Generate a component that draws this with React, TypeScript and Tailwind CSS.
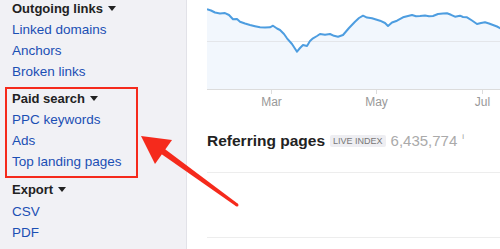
import React from 'react';

const linePoints: [number, number][] = [
  [0, 9.3], [4, 10.5], [8, 12.5], [13, 13.4], [18, 13.1], [22, 15], [26, 19.3], [30, 19], [33, 21.7],
  [38, 23.5], [43, 25], [48, 26.2], [53, 27.3], [58, 27.6], [63, 27.3], [66, 25.7], [70, 28.5],
  [73, 30], [77, 34], [80, 38.3], [85, 44], [90, 51.7], [93, 48], [96, 45], [100, 46], [103, 41],
  [106, 38.3], [110, 36], [113, 34], [118, 34.7], [123, 34], [127, 35.8], [131, 36.7], [136, 35],
  [142, 28], [148, 21.7], [152, 18], [156, 15.7], [160, 17.6], [165, 18.3], [173, 20.7], [178, 23],
  [181, 26], [185, 22.5], [190, 20.7], [196, 17.3], [200, 16.2], [205, 15], [209, 16.2], [213, 16],
  [218, 15.6], [222, 16.3], [226, 16], [231, 14], [236, 13.6], [240, 13.3], [244, 14.8], [248, 16.7],
  [253, 15.7], [256, 17], [260, 17.3], [265, 20.5], [270, 24], [274, 23], [278, 22.3], [282, 23.5],
  [286, 25], [290, 26.5], [294, 28.6],
];

const lineD = linePoints.map(([x, y], i) => `${i === 0 ? 'M' : 'L'}${x} ${y}`).join(' ');
const areaD = `${lineD} L294 89 L0 89 Z`;

function Caret() {
  return (
    <svg width="8" height="5" viewBox="0 0 8 5" className="ml-[5px] inline-block">
      <path d="M0 0 L8 0 L4 5 Z" fill="#222" />
    </svg>
  );
}

function Heading({ children, className = '' }: { children: React.ReactNode; className?: string }) {
  return (
    <div className={`flex items-center text-[13px] font-bold leading-[21px] text-[#222] ${className}`}>
      {children}
      <Caret />
    </div>
  );
}

function Link({ children, className = '' }: { children: React.ReactNode; className?: string }) {
  return <div className={`text-[13.5px] leading-[21px] text-[#1b4fb4] ${className}`}>{children}</div>;
}

export default function App() {
  return (
    <div className="relative flex h-[249px] w-[500px] overflow-hidden bg-white font-['Liberation_Sans',Arial,sans-serif]">
      <aside className="w-[187px] shrink-0 border-r border-[#e2e2e8] bg-[#f1f1f5] pl-[12px]">
        <Heading className="-mt-[2px]">Outgoing links</Heading>
        <Link>Linked domains</Link>
        <Link>Anchors</Link>
        <Link>Broken links</Link>
        <Heading className="mt-[6px]">Paid search</Heading>
        <Link>PPC keywords</Link>
        <Link>Ads</Link>
        <Link>Top landing pages</Link>
        <Heading className="mt-[7px]">Export</Heading>
        <Link className="mt-[1px] leading-[17px]">CSV</Link>
        <Link className="leading-[17px]">PDF</Link>
      </aside>

      <main className="min-w-0 flex-1 pl-[20px]">
        <svg width="294" height="110" viewBox="0 0 294 110" className="block">
          <path d={areaD} fill="#f2f7fd" />
          <line x1="0" y1="41.5" x2="294" y2="41.5" stroke="#e4e6ea" strokeWidth="1" />
          <path d={lineD} fill="none" stroke="#4d9de0" strokeWidth="2" strokeLinejoin="round" />
          <line x1="0" y1="89.5" x2="294" y2="89.5" stroke="#dcdcdc" strokeWidth="1" />
          <line x1="64.5" y1="89" x2="64.5" y2="94" stroke="#dcdcdc" strokeWidth="1" />
          <line x1="169.5" y1="89" x2="169.5" y2="94" stroke="#dcdcdc" strokeWidth="1" />
          <line x1="275.5" y1="89" x2="275.5" y2="94" stroke="#dcdcdc" strokeWidth="1" />
          <text x="64.5" y="106" textAnchor="middle" fontSize="12" fill="#999" fontFamily="Liberation Sans, Arial, sans-serif">Mar</text>
          <text x="169.5" y="106" textAnchor="middle" fontSize="12" fill="#999" fontFamily="Liberation Sans, Arial, sans-serif">May</text>
          <text x="275.5" y="106" textAnchor="middle" fontSize="12" fill="#999" fontFamily="Liberation Sans, Arial, sans-serif">Jul</text>
        </svg>

        <div className="mt-[21px] flex items-center whitespace-nowrap leading-[20px]">
          <span className="text-[15.5px] font-bold text-[#222]">Referring pages</span>
          <span className="ml-[5px] rounded-[2px] bg-[#eeeef2] px-[3px] text-[9px] leading-[12px] text-[#777]">LIVE INDEX</span>
          <span className="ml-[5px] text-[15px] text-[#aaa]">6,435,774</span>
          <span className="ml-[5px] -mt-[8px] text-[8px] text-[#999]">i</span>
        </div>

        <div className="mt-[21px] h-[65px] border-t border-[#ededed]" />
        <div className="border-t border-[#ededed]" />
      </main>

      <svg className="pointer-events-none absolute inset-0" width="500" height="249" viewBox="0 0 500 249">
        <rect x="6" y="88" width="131" height="89" fill="none" stroke="#f52a1c" strokeWidth="2" />
        <path d="M141 136 L155 164 L172 140 Z" fill="#f52a1c" />
        <path d="M162.8 147.6 L237.9 203.8 L236.1 206.2 L159.2 152.4 Z" fill="#f52a1c" />
        <circle cx="237" cy="205" r="1.5" fill="#f52a1c" />
      </svg>
    </div>
  );
}
